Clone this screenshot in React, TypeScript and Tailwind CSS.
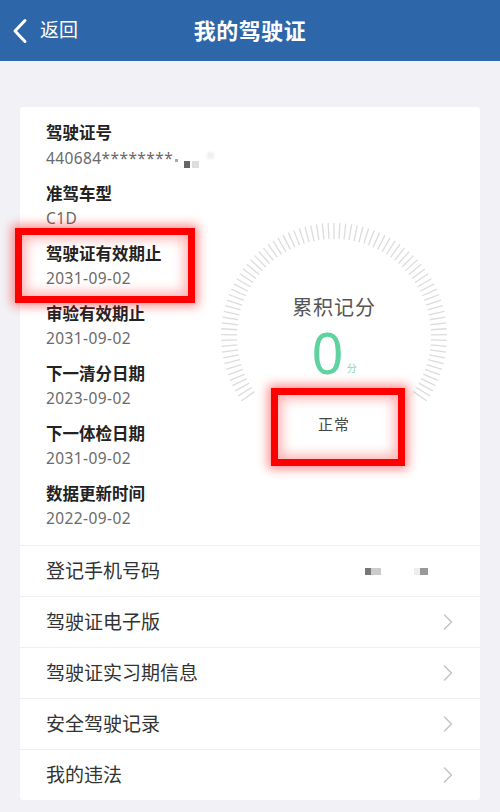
import React from "react";

const infos = [
  { label: "驾驶证号", value: "440684********" },
  { label: "准驾车型", value: "C1D" },
  { label: "驾驶证有效期止", value: "2031-09-02" },
  { label: "审验有效期止", value: "2031-09-02" },
  { label: "下一清分日期", value: "2023-09-02" },
  { label: "下一体检日期", value: "2031-09-02" },
  { label: "数据更新时间", value: "2022-09-02" },
];

const rows = ["驾驶证电子版", "驾驶证实习期信息", "安全驾驶记录", "我的违法"];

function Gauge() {
  const ticks = [];
  const n = 85;
  const start = -125;
  const end = 125;
  const cx = 120;
  const cy = 120;
  for (let i = 0; i < n; i++) {
    const a = ((start + ((end - start) * i) / (n - 1)) * Math.PI) / 180;
    const r1 = 97;
    const r2 = 113;
    ticks.push(
      <line
        key={i}
        x1={cx + r1 * Math.sin(a)}
        y1={cy - r1 * Math.cos(a)}
        x2={cx + r2 * Math.sin(a)}
        y2={cy - r2 * Math.cos(a)}
        stroke="#dcdcdc"
        strokeWidth="1.3"
      />
    );
  }
  return (
    <svg width="240" height="240" viewBox="0 0 240 240" className="absolute inset-0">
      {ticks}
    </svg>
  );
}

function Chevron() {
  return (
    <svg width="12" height="18" viewBox="0 0 12 18" fill="none">
      <path d="M2.5 2 L9.5 9 L2.5 16" stroke="#c6c6c8" strokeWidth="1.6" strokeLinecap="round" strokeLinejoin="round" />
    </svg>
  );
}

export default function App() {
  return (
    <div
      className="relative w-[500px] h-[812px] overflow-hidden bg-[#f2f2f6]"
      style={{ fontFamily: '"Noto Sans", "Noto Sans CJK SC", sans-serif' }}
    >
      <div className="relative h-[61px] bg-[#2e67a9] flex items-center">
        <div className="flex items-center pl-[12px]">
          <svg width="16" height="26" viewBox="0 0 16 26" fill="none">
            <path d="M13 2.5 L3 13 L13 23.5" stroke="white" strokeWidth="3" strokeLinecap="round" strokeLinejoin="round" />
          </svg>
          <span className="ml-[12px] text-[19px] text-white leading-none">返回</span>
        </div>
        <div className="absolute left-0 right-0 top-0 h-[61px] flex items-center justify-center pointer-events-none">
          <span className="text-[22px] font-bold text-white tracking-[0.5px]">我的驾驶证</span>
        </div>
      </div>

      <div className="px-5 pt-[46px]">
        <div className="bg-white rounded-[3px]">
          <div className="flex">
            <div className="flex-1 pl-[26px] pt-[15px] pb-[17px] flex flex-col gap-[15px]">
              {infos.map((it, i) => (
                <div key={i} className="flex flex-col">
                  <div className="text-[16.5px] leading-[22px] font-semibold text-[#222]">{it.label}</div>
                  <div className="mt-[3px] text-[15.5px] leading-[20px] text-[#6a6a6a] flex items-center tracking-[0.4px]">
                    {it.value}
                    {i === 0 && (
                      <span className="flex items-center ml-[2px] mt-[6px] gap-[2px]">
                        <span className="w-[3px] h-[3px] bg-[#aaa] blur-[0.5px]" />
                        <span className="w-[6px] h-[7px] ml-[4px] mt-[8px] bg-[#666] blur-[0.6px]" />
                        <span className="w-[7px] h-[7px] mt-[8px] bg-[#ddd] blur-[0.6px]" />
                        <span className="w-[7px] h-[7px] ml-[6px] -mt-[10px] bg-[#f0f0f0] blur-[1px]" />
                      </span>
                    )}
                  </div>
                </div>
              ))}
            </div>
            <div className="w-[240px] mr-[30px] pt-[109px]">
              <div className="relative w-[240px] h-[240px]">
                <Gauge />
                <div className="relative flex flex-col items-center pt-[80px]">
                  <div className="text-[20px] leading-[24px] text-[#555] tracking-[1px]">累积记分</div>
                  <div className="flex items-end mt-[10px]">
                    <span className="text-[56px] leading-[44px] font-normal text-[#5fd39f]" style={{ fontFamily: '"Noto Sans", sans-serif' }}>0</span>
                    <span className="text-[10px] leading-[12px] text-[#7fd9ae] ml-[3px]">分</span>
                  </div>
                  <div className="mt-[40px] text-[15px] leading-[20px] text-[#444] tracking-[1px]">正常</div>
                </div>
              </div>
            </div>
          </div>

          <div className="h-[51px] border-t border-[#efeff1] pl-[26px] pr-[52px] flex items-center justify-between">
            <span className="text-[19px] text-[#333]">登记手机号码</span>
            <span className="flex items-center">
              <span className="w-[6px] h-[7px] bg-[#777] blur-[0.6px]" />
              <span className="w-[10px] h-[7px] bg-[#ccc] blur-[0.6px]" />
              <span className="w-[6px] h-[7px] ml-[33px] bg-[#eee] blur-[0.6px]" />
              <span className="w-[8px] h-[7px] bg-[#999] blur-[0.6px]" />
            </span>
          </div>
          {rows.map((r) => (
            <div key={r} className="h-[51px] border-t border-[#efeff1] pl-[26px] pr-[26px] flex items-center justify-between">
              <span className="text-[19px] text-[#333]">{r}</span>
              <Chevron />
            </div>
          ))}
        </div>
      </div>

      <div className="absolute left-[15px] top-[228px] w-[180px] h-[75px] border-[7px] border-[#ff0000] shadow-[0_0_10px_3px_rgba(255,0,0,0.45),inset_0_0_12px_4px_rgba(255,0,0,0.3)]" />
      <div className="absolute left-[271px] top-[388px] w-[134px] h-[78px] border-[7px] border-[#ff0000] shadow-[0_0_10px_3px_rgba(255,0,0,0.45),inset_0_0_12px_4px_rgba(255,0,0,0.3)]" />
    </div>
  );
}
